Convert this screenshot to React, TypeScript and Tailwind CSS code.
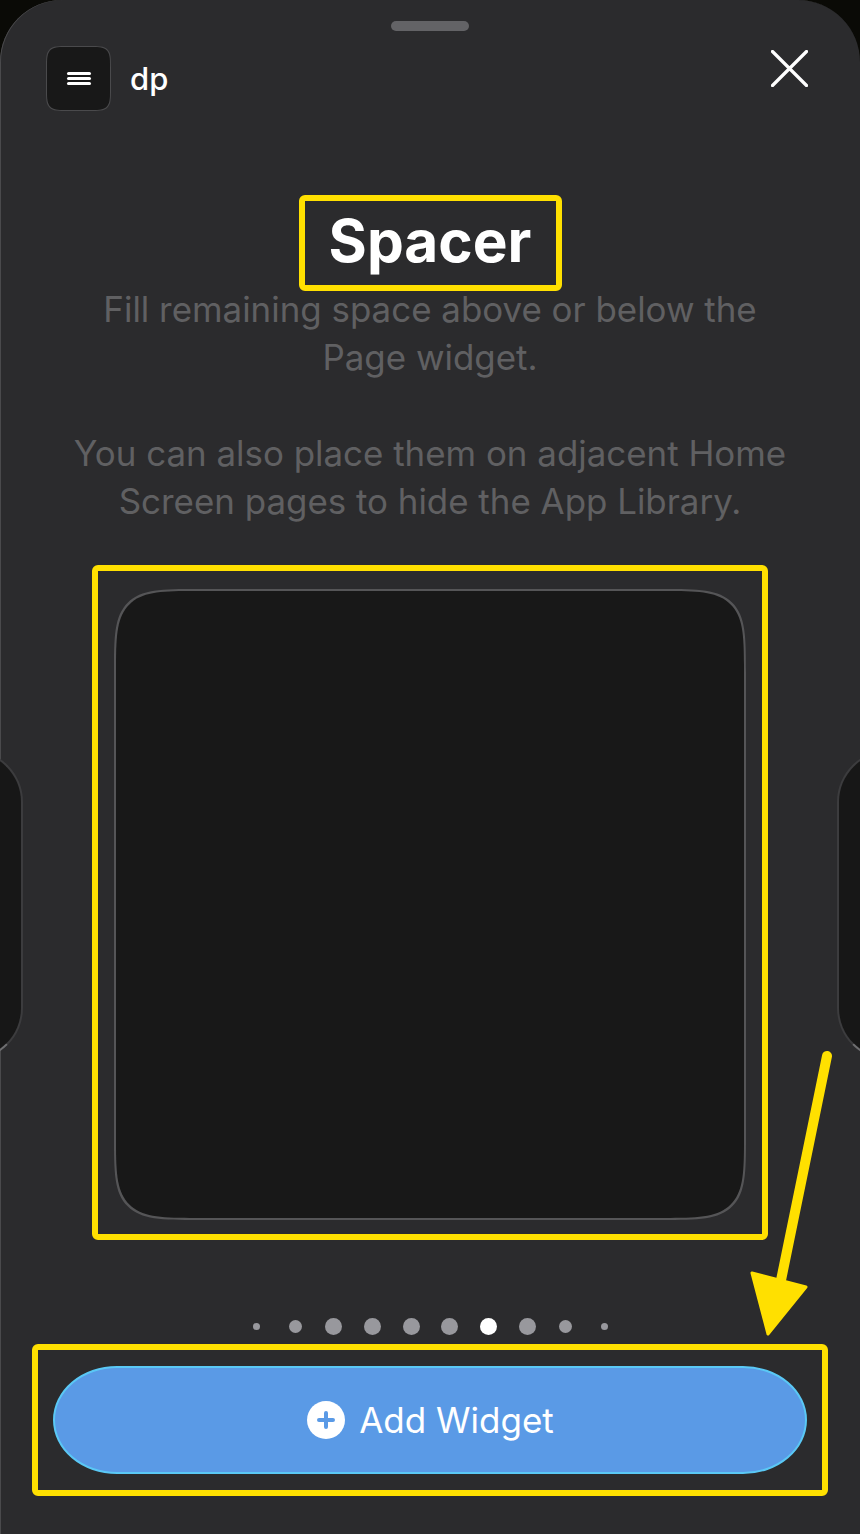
const dots = [7, 13, 17, 17, 17, 17, 17, 17, 13, 7];
const FONT = 'font-[Inter,"Liberation_Sans",sans-serif]';

function PeekCard({ side }: { side: 'left' | 'right' }) {
  // neighbouring widgets that peek in from the sides of the carousel
  return side === 'left' ? (
    <div className="absolute left-[-300px] top-[750px] w-[323px] h-[310px] rounded-[52px] bg-[#171717] border-2 border-[#3c3c3e] border-b-[#6e6e70]" />
  ) : (
    <div className="absolute right-[-300px] top-[750px] w-[323px] h-[310px] rounded-[52px] bg-[#171717] border-2 border-[#3c3c3e] border-b-[#6e6e70]" />
  );
}

export default function App() {
  return (
    <div className={`w-[860px] h-[1534px] bg-[#0a0a06] overflow-hidden ${FONT}`}>
      <div className="relative w-full h-full overflow-hidden rounded-t-[62px] bg-[#2b2b2d] shadow-[inset_1px_0_0_#4a4a4c] flex flex-col items-center">
        <PeekCard side="left" />
        <PeekCard side="right" />

        {/* Grab handle */}
        <div className="mt-[21px] w-[78px] h-[10px] rounded-full bg-[#636366] shrink-0" />

        {/* Header */}
        <div className="mt-[15px] w-full h-[65px] pl-[46px] pr-[52px] flex items-start justify-between shrink-0">
          <div className="flex items-center gap-[19px]">
            <div className="w-[65px] h-[65px] rounded-[22px] [corner-shape:squircle] bg-[#181818] border border-[#4a4a4c] flex flex-col items-center justify-center gap-[2px]">
              <div className="w-[24px] h-[3px] rounded-full bg-white" />
              <div className="w-[24px] h-[3px] rounded-full bg-white" />
              <div className="w-[24px] h-[3px] rounded-full bg-white" />
            </div>
            <span className="text-[31px] font-medium leading-none text-white">dp</span>
          </div>
          <svg className="mt-[4px]" width="37" height="37" viewBox="0 0 37 37" fill="none" stroke="white" strokeWidth="3.2" strokeLinecap="round">
            <path d="M1.5 1.5 L35.5 35.5 M35.5 1.5 L1.5 35.5" />
          </svg>
        </div>

        {/* Title */}
        <div className="mt-[84px] w-[263px] h-[96px] rounded-[6px] border-[6px] border-[#ffe000] flex items-center justify-center shrink-0">
          <h1 className="mt-[-4px] text-[58.5px] font-bold leading-none text-white">Spacer</h1>
        </div>

        {/* Description */}
        <div className="mt-[-6px] z-10 text-[34.9px] leading-[48px] text-[#606062] text-center whitespace-nowrap shrink-0">
          <p>Fill remaining space above or below the</p>
          <p>Page widget.</p>
          <p className="mt-[48px]">You can also place them on adjacent Home</p>
          <p>Screen pages to hide the App Library.</p>
        </div>

        {/* Widget preview */}
        <div className="mt-[40px] w-[676px] h-[675px] rounded-[6px] border-[6px] border-[#ffe000] flex items-center justify-center shrink-0">
          <div className="mt-[4px] w-[632px] h-[631px] rounded-[86px] [corner-shape:squircle] bg-[#181818] border-2 border-[#555557]" />
        </div>

        {/* Page dots */}
        <div className="mt-[78px] ml-[1px] h-[17px] flex items-center justify-center shrink-0">
          {dots.map((size, i) => (
            <div key={i} className="w-[38.67px] flex justify-center">
              <div
                className={`rounded-full ${i === 6 ? 'bg-white' : 'bg-[#98989d]'}`}
                style={{ width: size, height: size }}
              />
            </div>
          ))}
        </div>

        {/* Add widget button */}
        <div className="mt-[9px] w-[796px] h-[152px] rounded-[6px] border-[6px] border-[#ffe000] flex items-center justify-center shrink-0">
          <button className="w-[754px] h-[108px] rounded-[64px/54px] bg-[#5a9ae6] border-2 border-[#5ac8f5] flex items-center justify-center gap-[14px]">
            <span className="ml-[1px] w-[38px] h-[38px] rounded-full bg-white flex items-center justify-center">
              <svg width="18" height="18" viewBox="0 0 18 18" fill="none" stroke="#5a9ae6" strokeWidth="4" strokeLinecap="round">
                <path d="M9 2 V16 M2 9 H16" />
              </svg>
            </span>
            <span className="text-[35px] leading-none text-white">Add Widget</span>
          </button>
        </div>

        {/* Annotation arrow */}
        <svg className="absolute left-0 top-0" width="860" height="1534" viewBox="0 0 860 1534" fill="none">
          <path d="M827 1056 L779 1290" stroke="#ffe000" strokeWidth="10" strokeLinecap="round" />
          <path d="M752 1273 L806 1287 L768 1334 Z" fill="#ffe000" stroke="#ffe000" strokeWidth="3" strokeLinejoin="round" />
        </svg>
      </div>
    </div>
  );
}
